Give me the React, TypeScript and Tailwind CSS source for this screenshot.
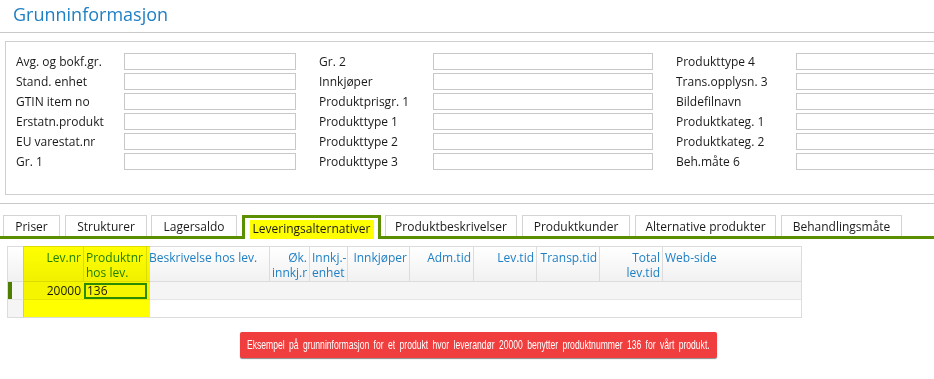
import React from "react";

const font = { fontFamily: "'Open Sans', 'Noto Sans', sans-serif" };

const formCols = [
  {
    cls: "w-[280px]",
    labelW: "w-[108px]",
    inputW: "w-[172px]",
    labels: ["Avg. og bokf.gr.", "Stand. enhet", "GTIN item no", "Erstatn.produkt", "EU varestat.nr", "Gr. 1"],
  },
  {
    cls: "w-[334px] ml-[23px]",
    labelW: "w-[114px]",
    inputW: "w-[220px]",
    labels: ["Gr. 2", "Innkjøper", "Produktprisgr. 1", "Produkttype 1", "Produkttype 2", "Produkttype 3"],
  },
  {
    cls: "w-[340px] ml-[23px] shrink-0",
    labelW: "w-[120px]",
    inputW: "w-[220px]",
    labels: ["Produkttype 4", "Trans.opplysn. 3", "Bildefilnavn", "Produktkateg. 1", "Produktkateg. 2", "Beh.måte 6"],
  },
];

const tabs = [
  { name: "Priser", cls: "w-[57px] ml-[3px]" },
  { name: "Strukturer", cls: "w-[82px] ml-[5px]" },
  { name: "Lagersaldo", cls: "w-[86px] ml-[4px]" },
  { name: "Leveringsalternativer", cls: "w-[139px] ml-[5px]", active: true },
  { name: "Produktbeskrivelser", cls: "w-[132px] ml-[4px]" },
  { name: "Produktkunder", cls: "w-[108px] ml-[5px]" },
  { name: "Alternative produkter", cls: "w-[141px] ml-[5px]" },
  { name: "Behandlingsmåte", cls: "w-[121px] ml-[5px]" },
];

const columns = [
  { lines: ["Lev.nr"], w: "w-[60px]", align: "text-right" },
  { lines: ["Produktnr", "hos lev."], w: "w-[63px]", align: "text-left" },
  { lines: ["Beskrivelse hos lev."], w: "w-[123px]", align: "text-left" },
  { lines: ["Øk.", "innkj.r"], w: "w-[40px]", align: "text-right" },
  { lines: ["Innkj.-", "enhet"], w: "w-[38px]", align: "text-left" },
  { lines: ["Innkjøper"], w: "w-[62px]", align: "text-right" },
  { lines: ["Adm.tid"], w: "w-[64px]", align: "text-right" },
  { lines: ["Lev.tid"], w: "w-[63px]", align: "text-right" },
  { lines: ["Transp.tid"], w: "w-[63px]", align: "text-right" },
  { lines: ["Total", "lev.tid"], w: "w-[63px]", align: "text-right" },
  { lines: ["Web-side"], w: "w-[140px]", align: "text-left" },
];

export default function App() {
  return (
    <div className="w-[934px] h-[379px] bg-white overflow-hidden text-[12px] text-[#1a1a1a] flex flex-col" style={font}>
      <div className="h-[33px] border-b border-[#c9c9c9] pl-[13px] pt-[2px] text-[18px] leading-[24px] text-[#1e7fc4]">
        Grunninformasjon
      </div>

      <div className="ml-[5px] mt-[8px] h-[154px] border-l border-t border-b border-[#cfcfcf] pl-[10px] pt-[11px] flex">
        {formCols.map((col, i) => (
          <div key={i} className={`${col.cls} flex flex-col gap-[3px]`}>
            {col.labels.map((l) => (
              <div key={l} className="flex items-center h-[17px]">
                <div className={`${col.labelW} shrink-0 leading-[17px]`}>{l}</div>
                <div className={`${col.inputW} shrink-0 h-[17px] border border-[#c8c8c8] bg-white`} />
              </div>
            ))}
          </div>
        ))}
      </div>

      <div className="mt-[8px] border-t border-[#c9c9c9]" />

      <div className="mt-[11px] flex items-end border-b-[3px] border-[#5b8f00] h-[24px]">
        {tabs.map((t) =>
          t.active ? (
            <div
              key={t.name}
              className={`${t.cls} shrink-0 h-[24px] -mb-[3px] border-t-[3px] border-l-[3px] border-r-[3px] border-[#5b8f00] bg-white flex justify-center pt-[2px]`}
            >
              <span className="bg-[#ffff00] w-[124px] h-[19px] text-center leading-[18px]">{t.name}</span>
            </div>
          ) : (
            <div
              key={t.name}
              className={`${t.cls} shrink-0 h-[21px] border-t border-l border-r border-[#d4d4d4] text-center leading-[21px]`}
            >
              {t.name}
            </div>
          )
        )}
      </div>

      <div className="relative ml-[7px] mt-[7px] w-[795px] border border-[#dcdcdc]">
        <div className="flex h-[35px] border-b border-[#dcdcdc] bg-gradient-to-b from-white to-[#f1f1f1] text-[#1e7fc4] leading-[15px]">
          <div className="w-[16px] shrink-0 border-r border-[#dcdcdc]" />
          {columns.map((c, i) => (
            <div
              key={i}
              className={`${c.w} ${c.align} shrink-0 pt-[3px] px-[2px] ${i < columns.length - 1 ? "border-r border-[#dcdcdc]" : ""}`}
            >
              {c.lines.map((l) => (
                <div key={l} className="whitespace-nowrap h-[15px]">{l}</div>
              ))}
            </div>
          ))}
        </div>
        <div className="flex h-[17px] bg-[#f5f5f5] leading-[17px]">
          <div className="w-[16px] shrink-0 border-r border-[#dcdcdc] flex">
            <div className="w-[4px] h-full bg-[#4e7d00]" />
          </div>
          <div className="w-[60px] shrink-0 text-right pr-[3px]">20000</div>
          <div className="w-[63px] shrink-0 h-[16px] mt-[0.5px] border-2 border-[#2a8a1a] leading-[12px] pl-[1px]">136</div>
        </div>
        <div className="flex h-[18px] border-t border-[#e6e6e6]">
          <div className="w-[16px] shrink-0 border-r border-[#dcdcdc] bg-[#f5f5f5]" />
        </div>
        <div className="absolute left-[15px] top-[-1px] w-[127px] h-[71px] bg-[#ffff00] mix-blend-multiply pointer-events-none" />
      </div>

      <div className="ml-[240px] mt-[14px] w-[477px] h-[26px] bg-[#f03d3d] rounded-[2px] shadow-[0_1px_1px_#8a8a8a] overflow-hidden pl-[7px]">
        <span
          className="inline-block origin-left scale-x-[0.66] text-white text-[13px] leading-[26px] [word-spacing:3px] whitespace-nowrap"
          style={{ fontFamily: "'Liberation Sans', Arial, sans-serif" }}
        >
          Eksempel på grunninformasjon for et produkt hvor leverandør 20000 benytter produktnummer 136 for vårt produkt.
        </span>
      </div>
    </div>
  );
}
